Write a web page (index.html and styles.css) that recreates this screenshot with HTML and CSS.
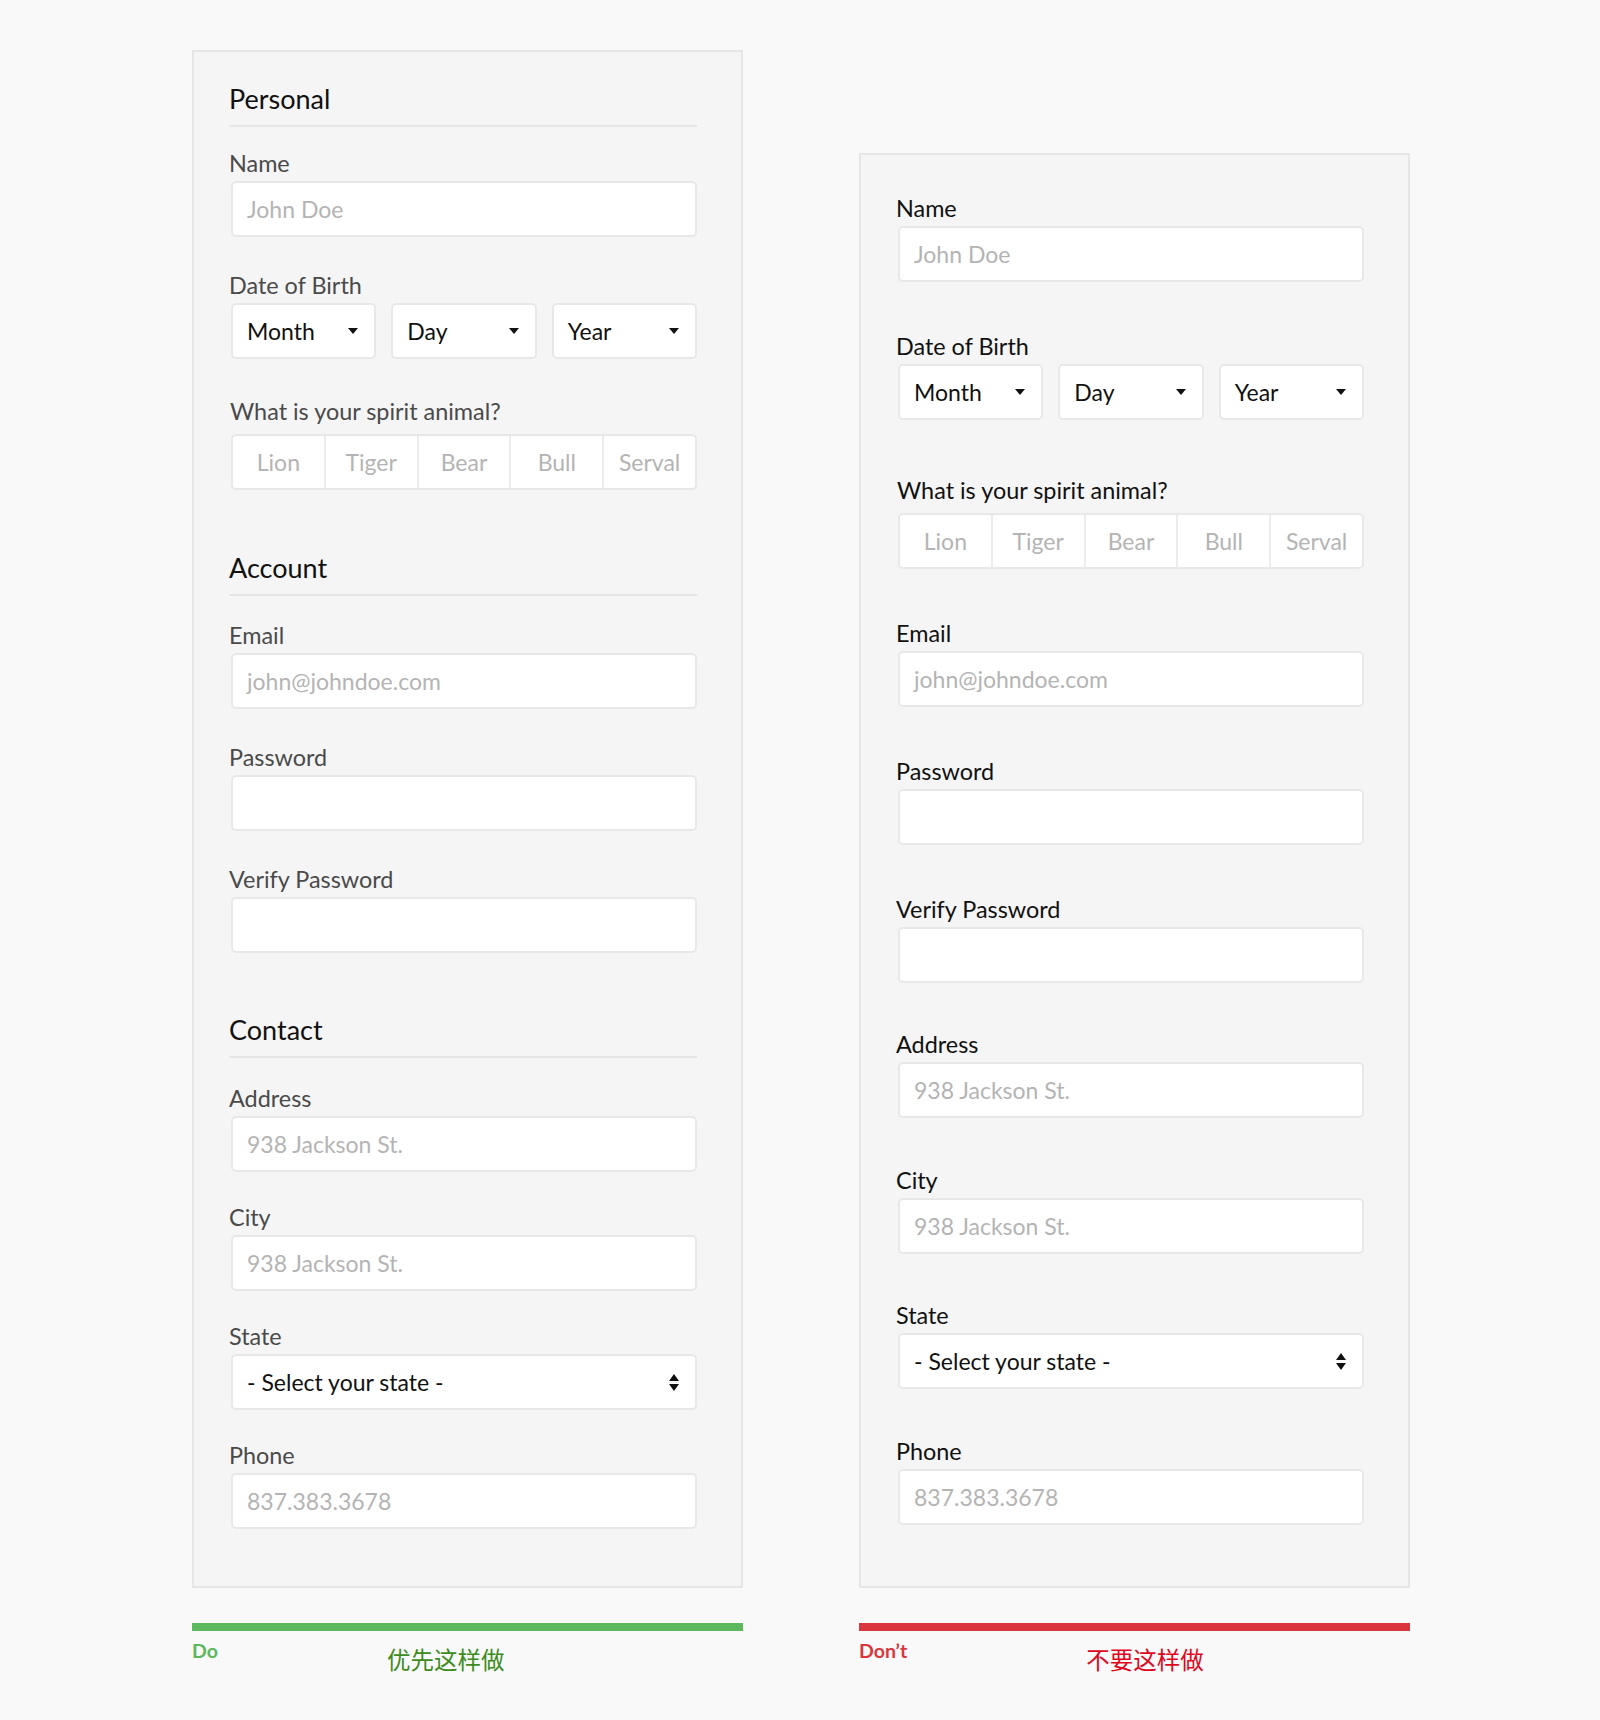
FILE: index.html
```html
<!DOCTYPE html>
<html lang="en">
<head>
<meta charset="utf-8">
<title>Form layout: Do / Don't</title>
<link rel="stylesheet" href="styles.css">
</head>
<body>
<div class="page">

  <div class="column column--do">
    <div class="panel panel--do">
      <section class="section section--personal">
        <h2 class="section-title section-title--first">Personal</h2>
        <div class="group">
          <div class="label">Name</div>
          <div class="field placeholder">John Doe</div>
        </div>
        <div class="group">
          <div class="label">Date of Birth</div>
          <div class="selects">
            <div class="field select">Month<svg class="caret" width="10" height="6" viewBox="0 0 10 6"><path d="M0 0H10L5 6Z"/></svg></div>
            <div class="field select">Day<svg class="caret" width="10" height="6" viewBox="0 0 10 6"><path d="M0 0H10L5 6Z"/></svg></div>
            <div class="field select">Year<svg class="caret" width="10" height="6" viewBox="0 0 10 6"><path d="M0 0H10L5 6Z"/></svg></div>
          </div>
        </div>
        <div class="group group--spirit">
          <div class="label label--spirit">What is your spirit animal?</div>
          <div class="segments">
            <div class="segment">Lion</div>
            <div class="segment">Tiger</div>
            <div class="segment">Bear</div>
            <div class="segment">Bull</div>
            <div class="segment">Serval</div>
          </div>
        </div>
      </section>

      <section class="section section--account">
        <h2 class="section-title">Account</h2>
        <div class="group">
          <div class="label">Email</div>
          <div class="field placeholder">john@johndoe.com</div>
        </div>
        <div class="group">
          <div class="label">Password</div>
          <div class="field"></div>
        </div>
        <div class="group">
          <div class="label">Verify Password</div>
          <div class="field"></div>
        </div>
      </section>

      <section class="section section--contact">
        <h2 class="section-title">Contact</h2>
        <div class="group">
          <div class="label">Address</div>
          <div class="field placeholder">938 Jackson St.</div>
        </div>
        <div class="group">
          <div class="label">City</div>
          <div class="field placeholder">938 Jackson St.</div>
        </div>
        <div class="group">
          <div class="label">State</div>
          <div class="field select">- Select your state -<svg class="sort" width="10" height="17" viewBox="0 0 10 17"><path d="M5 0L10 7H0Z M0 10H10L5 17Z"/></svg></div>
        </div>
        <div class="group">
          <div class="label">Phone</div>
          <div class="field placeholder">837.383.3678</div>
        </div>
      </section>
    </div>
    <div class="verdict verdict--do">
      <span class="verdict-tag">Do</span>
      <span class="verdict-cn verdict-cn--do">优先这样做</span>
    </div>
  </div>

  <div class="column column--dont">
    <div class="panel panel--dont">
      <div class="group">
        <div class="label">Name</div>
        <div class="field placeholder">John Doe</div>
      </div>
      <div class="group">
        <div class="label">Date of Birth</div>
        <div class="selects">
          <div class="field select">Month<svg class="caret" width="10" height="6" viewBox="0 0 10 6"><path d="M0 0H10L5 6Z"/></svg></div>
          <div class="field select">Day<svg class="caret" width="10" height="6" viewBox="0 0 10 6"><path d="M0 0H10L5 6Z"/></svg></div>
          <div class="field select">Year<svg class="caret" width="10" height="6" viewBox="0 0 10 6"><path d="M0 0H10L5 6Z"/></svg></div>
        </div>
      </div>
      <div class="group group--spirit">
        <div class="label label--spirit">What is your spirit animal?</div>
        <div class="segments">
          <div class="segment">Lion</div>
          <div class="segment">Tiger</div>
          <div class="segment">Bear</div>
          <div class="segment">Bull</div>
          <div class="segment">Serval</div>
        </div>
      </div>
      <div class="group">
        <div class="label">Email</div>
        <div class="field placeholder">john@johndoe.com</div>
      </div>
      <div class="group">
        <div class="label">Password</div>
        <div class="field"></div>
      </div>
      <div class="group">
        <div class="label">Verify Password</div>
        <div class="field"></div>
      </div>
      <div class="group group--contact">
        <div class="label">Address</div>
        <div class="field placeholder">938 Jackson St.</div>
      </div>
      <div class="group group--contact">
        <div class="label">City</div>
        <div class="field placeholder">938 Jackson St.</div>
      </div>
      <div class="group group--contact">
        <div class="label">State</div>
        <div class="field select">- Select your state -<svg class="sort" width="10" height="17" viewBox="0 0 10 17"><path d="M5 0L10 7H0Z M0 10H10L5 17Z"/></svg></div>
      </div>
      <div class="group group--contact">
        <div class="label">Phone</div>
        <div class="field placeholder">837.383.3678</div>
      </div>
    </div>
    <div class="verdict verdict--dont">
      <span class="verdict-tag">Don’t</span>
      <span class="verdict-cn verdict-cn--dont">不要这样做</span>
    </div>
  </div>

</div>
</body>
</html>
```

FILE: styles.css
```css
* { box-sizing: border-box; }

html, body {
  margin: 0;
  padding: 0;
  background: #f9f9f9;
}

body {
  font-family: Lato, "Noto Sans", "Noto Sans CJK SC", sans-serif;
  color: #111;
  height: 1720px;
}

.page {
  display: flex;
  align-items: flex-start;
  gap: 116px;
  padding: 50px 0 0 192px;
}

.column {
  width: 551px;
  display: flex;
  flex-direction: column;
}

.column--dont {
  margin-top: 103px;
}

.panel {
  background: #f5f5f5;
  border: 2px solid #e6e6e6;
  padding: 30.5px 44px 56.5px 35px;
}

.panel--dont {
  padding-top: 40px;
  padding-bottom: 61px;
}

/* section headings */
.section-title {
  margin: 62px 0 26px;
  padding: 0 1px 10px 0;
  border-bottom: 2px solid #e6e6e6;
  font-size: 27px;
  line-height: 32.4px;
  font-weight: 400;
  color: #111;
}

.section-title--first {
  margin-top: 0;
  margin-bottom: 23px;
}

.section--contact .section-title {
  margin-top: 60.5px;
  margin-bottom: 27px;
}

/* vertical rhythm of groups */
.panel--do .group + .group {
  margin-top: 35px;
}

.panel--do .section--contact .group + .group {
  margin-top: 32px;
}

.panel--do .group.group--spirit {
  margin-top: 39.5px;
}

.panel--dont .group + .group {
  margin-top: 51px;
}

.panel--dont .group.group--spirit {
  margin-top: 57px;
}

.panel--dont .group.group--contact {
  margin-top: 48.5px;
}

.label {
  font-size: 23.4px;
  line-height: 26px;
  color: #4a4a4a;
  margin-bottom: 5px;
}

.panel--dont .label {
  color: #111;
}

.label--spirit {
  margin-left: 1px;
  margin-bottom: 9.5px;
}

.field {
  height: 56px;
  margin-left: 2px;
  background: #fff;
  border: 2px solid #e8e8e8;
  border-radius: 5px;
  padding: 0 14px;
  display: flex;
  align-items: center;
  font-size: 23px;
  color: #111;
}

.placeholder {
  color: #b4b4b4;
}

.select {
  justify-content: space-between;
  padding-right: 16px;
}

.selects {
  display: flex;
  gap: 15px;
  margin-left: 2px;
}

.selects .field {
  flex: 1 1 0;
  margin-left: 0;
}

.caret path,
.sort path {
  fill: #111;
}

.segments {
  display: flex;
  height: 56px;
  margin-left: 2px;
  background: #fff;
  border: 2px solid #e8e8e8;
  border-radius: 5px;
  overflow: hidden;
}

.segment {
  flex: 1 1 0;
  display: flex;
  align-items: center;
  justify-content: center;
  font-size: 23px;
  color: #b4b4b4;
}

.segment + .segment {
  border-left: 2px solid #ececec;
}

/* do / don't captions */
.verdict {
  margin-top: 35px;
  border-top: 8px solid;
  display: flex;
  align-items: flex-start;
  padding-top: 9px;
}

.verdict--do { border-color: #5cb85c; }
.verdict--dont { border-color: #d9363e; }

.verdict-tag {
  font-size: 19.5px;
  line-height: 22.8px;
  font-weight: 700;
}

.verdict--do .verdict-tag { color: #5cb85c; }
.verdict--dont .verdict-tag { color: #d9363e; }

.verdict-cn {
  font-family: "Noto Sans CJK SC", sans-serif;
  font-size: 23.5px;
  line-height: 28px;
  margin-top: 5.5px;
}

.verdict-cn--do {
  color: #3c8c1c;
  margin-left: 169px;
}

.verdict-cn--dont {
  color: #e0061c;
  margin-left: 179px;
}
```
